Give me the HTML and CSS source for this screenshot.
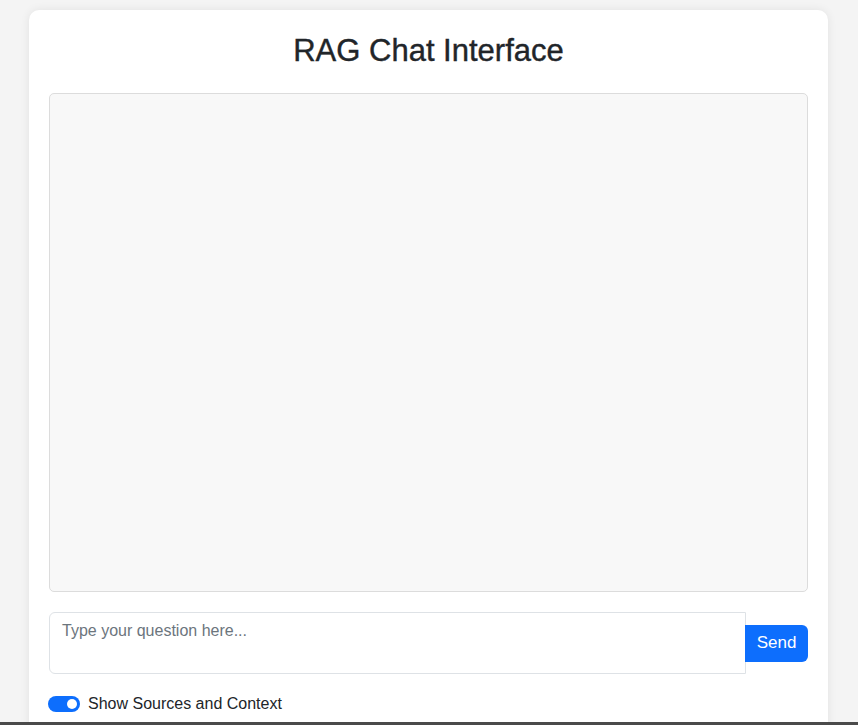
FILE: index.html
```html
<!DOCTYPE html>
<html lang="en">
<head>
<meta charset="utf-8">
<title>RAG Chat Interface</title>
<link rel="stylesheet" href="styles.css">
</head>
<body>
  <main class="card">
    <h1 class="title">RAG Chat Interface</h1>
    <div class="chat-box"></div>
    <div class="input-row">
      <textarea class="question" rows="2" placeholder="Type your question here..."></textarea>
      <button class="send" type="button">Send</button>
    </div>
    <label class="switch-row">
      <span class="switch"><span class="knob"></span></span>
      <span class="switch-label">Show Sources and Context</span>
    </label>
  </main>
  <div class="bottom-bar"></div>
</body>
</html>
```

FILE: styles.css
```css
* { box-sizing: border-box; }
html, body { height: 100%; }
body {
  margin: 0;
  background: #f4f4f4;
  font-family: "Liberation Sans", Arial, Helvetica, sans-serif;
  color: #212529;
  overflow: hidden;
}
.card {
  width: 799px;
  margin: 10px 0 0 29px;
  background: #fff;
  border-radius: 10px;
  box-shadow: 0 0 10px rgba(0,0,0,0.08);
  padding: 20px 20px 40px;
}
.title {
  margin: 2px 0 23px;
  text-align: center;
  font-size: 31px;
  font-weight: 400;
  line-height: 38px;
  -webkit-text-stroke: 0.4px #212529;
}
.chat-box {
  height: 499px;
  background: #f8f8f8;
  border: 1px solid #dcdcdc;
  border-radius: 5px;
}
.input-row {
  display: flex;
  align-items: center;
  margin-top: 20px;
}
.question {
  flex: 1;
  height: 62px;
  resize: none;
  border: 1px solid #dee2e6;
  border-radius: 6px 0 0 6px;
  padding: 6px 12px;
  font-family: inherit;
  font-size: 16px;
  line-height: 24px;
  color: #212529;
  background: #fff;
  outline: none;
}
.question::placeholder { color: #6c757d; opacity: 1; }
.send {
  width: 63px;
  height: 37px;
  margin-left: -1px;
  border: none;
  border-radius: 0 6px 6px 0;
  background: #0d6efd;
  color: #fff;
  font-family: inherit;
  font-size: 17px;
  padding: 0;
}
.switch-row {
  display: flex;
  align-items: center;
  gap: 8px;
  margin-top: 21px;
  margin-left: -1px;
  font-size: 16px;
  line-height: 18px;
}
.switch {
  position: relative;
  width: 32px;
  height: 16px;
  border-radius: 8px;
  background: #0d6efd;
  display: inline-block;
}
.knob {
  position: absolute;
  right: 3px;
  top: 3px;
  width: 10px;
  height: 10px;
  border-radius: 50%;
  background: #fff;
}
.bottom-bar {
  position: fixed;
  left: 0;
  right: 0;
  bottom: 0;
  height: 3px;
  background: #4a4a4a;
}
```
